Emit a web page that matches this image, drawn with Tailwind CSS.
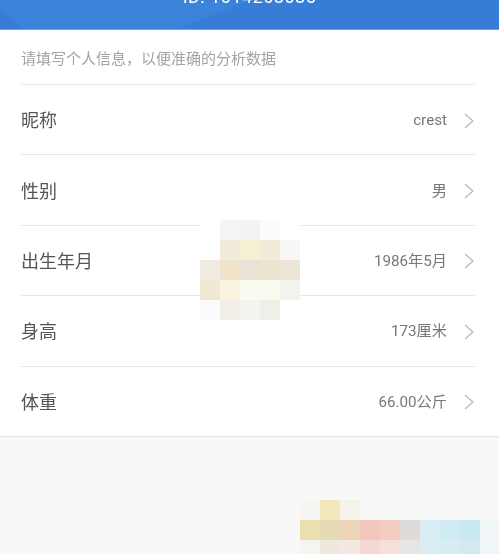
<!DOCTYPE html>
<html lang="zh-CN">
<head>
<meta charset="UTF-8">
<title>个人信息</title>
<script src="https://cdn.jsdelivr.net/npm/@tailwindcss/browser@4"></script>
</head>
<body class="relative w-[499px] h-[554px] overflow-hidden bg-[#f8f8f8] font-['Roboto','Noto_Sans_CJK_SC',sans-serif]">
  <!-- header, cut off by the top of the shot -->
  <header class="relative h-[30px] overflow-hidden bg-[#377dd8] border-b border-[#6aa5e6]">
    <div class="absolute left-0 top-0 w-[250px] h-[30px] bg-[#3b84da] blur-[1px] [clip-path:polygon(0_0,100%_0,175px_100%,24px_100%,0_8px)]"></div>
    <p class="absolute left-0 right-0 top-[-13px] text-center text-[18px] leading-[20px] tracking-[0.5px] text-white blur-[0.4px]">ID: 1014268085</p>
  </header>

  <main class="bg-white border-b border-[#e6e6e6] blur-[0.4px]">
    <p class="h-[54px] pl-[21px] pt-[5px] flex items-center text-[15px] text-[#a3a3a3]">请填写个人信息，以便准确的分析数据</p>
    <ul class="pl-[21px] pr-[24px]">
      <li class="h-[70.4px] pt-[2px] border-t border-[#e6e6e6] flex items-center justify-between text-[#555]">
        <span class="text-[18px]">昵称</span>
        <span class="flex items-center gap-[17px] text-[15.2px] text-[#777]">crest
          <svg class="w-[10px] h-[16px] mr-px" viewBox="0 0 10 16" fill="none" stroke="#bdbdbd" stroke-width="1.5"><path d="M1 1l8 7-8 7"/></svg>
        </span>
      </li>
      <li class="h-[70.4px] pt-[2px] border-t border-[#e6e6e6] flex items-center justify-between text-[#555]">
        <span class="text-[18px]">性别</span>
        <span class="flex items-center gap-[17px] text-[15.2px] text-[#777]">男
          <svg class="w-[10px] h-[16px] mr-px" viewBox="0 0 10 16" fill="none" stroke="#bdbdbd" stroke-width="1.5"><path d="M1 1l8 7-8 7"/></svg>
        </span>
      </li>
      <li class="h-[70.4px] pt-[2px] border-t border-[#e6e6e6] flex items-center justify-between text-[#555]">
        <span class="text-[18px]">出生年月</span>
        <span class="flex items-center gap-[17px] text-[15.2px] text-[#777]">1986年5月
          <svg class="w-[10px] h-[16px] mr-px" viewBox="0 0 10 16" fill="none" stroke="#bdbdbd" stroke-width="1.5"><path d="M1 1l8 7-8 7"/></svg>
        </span>
      </li>
      <li class="h-[70.4px] pt-[2px] border-t border-[#e6e6e6] flex items-center justify-between text-[#555]">
        <span class="text-[18px]">身高</span>
        <span class="flex items-center gap-[17px] text-[15.2px] text-[#777]">173厘米
          <svg class="w-[10px] h-[16px] mr-px" viewBox="0 0 10 16" fill="none" stroke="#bdbdbd" stroke-width="1.5"><path d="M1 1l8 7-8 7"/></svg>
        </span>
      </li>
      <li class="h-[70.4px] pt-[2px] border-t border-[#e6e6e6] flex items-center justify-between text-[#555]">
        <span class="text-[18px]">体重</span>
        <span class="flex items-center gap-[17px] text-[15.2px] text-[#777]">66.00公斤
          <svg class="w-[10px] h-[16px] mr-px" viewBox="0 0 10 16" fill="none" stroke="#bdbdbd" stroke-width="1.5"><path d="M1 1l8 7-8 7"/></svg>
        </span>
      </li>
    </ul>
  </main>

  <!-- mosaic patch over the middle rows -->
  <div class="absolute left-[200px] top-[220px] grid grid-cols-[repeat(5,20px)] grid-rows-[repeat(5,20px)]">
    <i class="bg-white"></i><i class="bg-[#f5f5f5]"></i><i class="bg-[#f4f3f1]"></i><i class="bg-[#fcfcfc]"></i><i class="bg-white"></i>
    <i class="bg-white"></i><i class="bg-[#f1ecd9]"></i><i class="bg-[#f6f1d3]"></i><i class="bg-[#f0ecd8]"></i><i class="bg-[#f8f7f5]"></i>
    <i class="bg-[#f0ece2]"></i><i class="bg-[#f0e2cb]"></i><i class="bg-[#e9e3d5]"></i><i class="bg-[#ece3d1]"></i><i class="bg-[#ede5d6]"></i>
    <i class="bg-[#efe9d3]"></i><i class="bg-[#f8f4df]"></i><i class="bg-[#fbfaee]"></i><i class="bg-[#fbfaee]"></i><i class="bg-[#f4f2ed]"></i>
    <i class="bg-[#fbfbfb]"></i><i class="bg-[#f1efe7]"></i><i class="bg-[#f5f3ed]"></i><i class="bg-[#f0eee9]"></i><i class="bg-white"></i>
  </div>

  <!-- mosaic patch bottom right -->
  <div class="absolute left-[300px] top-[500px] grid grid-cols-[repeat(10,20px)] grid-rows-[repeat(3,20px)]">
    <i class="bg-[#f6f5f1]"></i><i class="bg-[#f2e8bb]"></i><i class="bg-[#f5f2ea]"></i><i></i><i></i><i></i><i></i><i></i><i></i><i></i>
    <i class="bg-[#ecdfb0]"></i><i class="bg-[#e6dab4]"></i><i class="bg-[#ecd5b8]"></i><i class="bg-[#f2c8bc]"></i><i class="bg-[#f4cdc2]"></i><i class="bg-[#dfdbd8]"></i><i class="bg-[#d8edf4]"></i><i class="bg-[#cfebf4]"></i><i class="bg-[#c9e9f2]"></i><i class="bg-[#f0f6f7]"></i>
    <i class="bg-[#f5f4f0]"></i><i class="bg-[#eee9dc]"></i><i class="bg-[#f3e8e3]"></i><i class="bg-[#f4d9d2]"></i><i class="bg-[#f5e1dc]"></i><i class="bg-[#e6e6e4]"></i><i class="bg-[#daedf3]"></i><i class="bg-[#d6ecf3]"></i><i class="bg-[#d3e9ef]"></i><i class="bg-[#f0f6f7]"></i>
  </div>
</body>
</html>
